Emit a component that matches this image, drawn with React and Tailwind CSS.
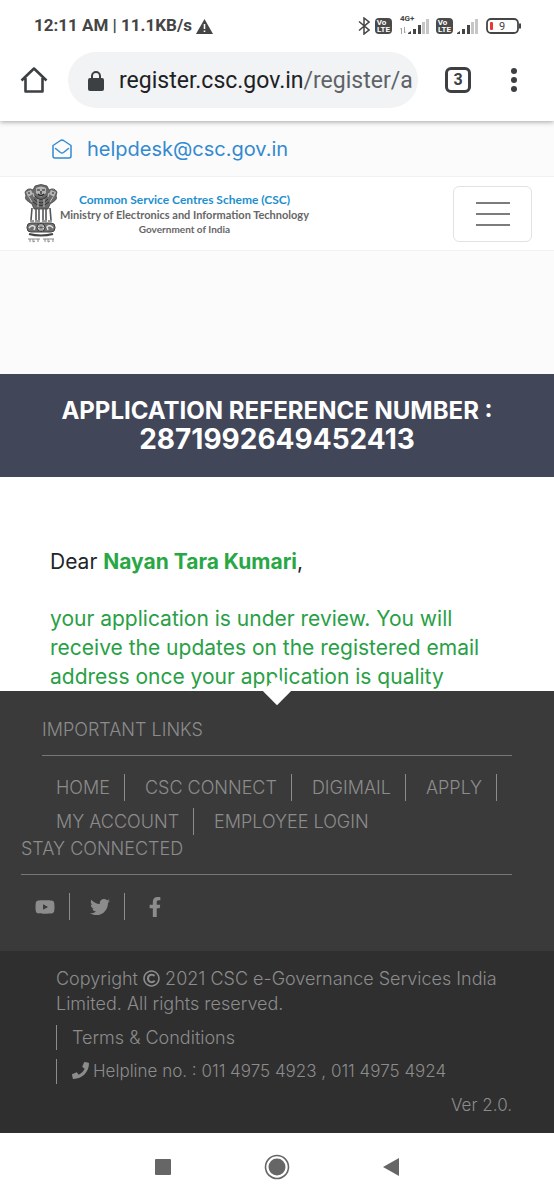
import React from 'react';
import { FaYoutube, FaTwitter, FaFacebookF, FaRegCopyright } from 'react-icons/fa';

const LINKS = ['HOME', 'CSC CONNECT', 'DIGIMAIL', 'APPLY', 'MY ACCOUNT', 'EMPLOYEE LOGIN'];

const SOCIAL = [
  { name: 'YouTube', Icon: FaYoutube },
  { name: 'Twitter', Icon: FaTwitter },
  { name: 'Facebook', Icon: FaFacebookF },
];

const Volte = () => (
  <span className="flex h-4 w-[17px] flex-col items-center justify-center rounded-sm bg-[#4a4a4a] text-[8px] leading-[7px] font-bold text-white">
    <span className="-ml-1">Vo</span>
    <span>LTE</span>
  </span>
);

const Signal = () => (
  <svg width="21" height="16" viewBox="0 0 21 16">
    <path d="M0 16v-1l3-2v3zM5 11h3v5H5zM10 7h3v9h-3z" fill="#454545" />
    <path d="M14 4h3v12h-3zM18 1h3v15h-3z" fill="#c6c6c6" />
  </svg>
);

const StatusBar = () => (
  <div className="flex h-[52px] items-center justify-between pr-8 pl-[34px] font-['Roboto',sans-serif] text-[#454545]">
    <div className="flex items-center gap-1 text-[17px] font-bold">
      <span>12:11 AM | 11.1KB/s</span>
      <svg width="17" height="15" viewBox="0 0 17 15">
        <path d="M8.500 0 17 15H0z" fill="#454545" />
        <path d="M7.700 5h1.600v5H7.700zM7.700 11.500h1.600V13H7.700z" fill="#fff" />
      </svg>
    </div>
    <div className="flex items-center gap-1">
      <svg className="mr-px" width="12" height="18" viewBox="0 0 12 18" fill="none" stroke="currentColor" strokeWidth="1.500">
        <path d="M1 4.500 11 13l-5 4V1l5 4L1 13.500" />
      </svg>
      <Volte />
      <div className="relative ml-3">
        <Signal />
        <span className="absolute -top-1 -left-2 text-[8px] leading-[10px] font-bold">4G+</span>
        <svg className="absolute bottom-0 -left-2" width="6" height="7" viewBox="0 0 6 7" fill="none" stroke="#a5a5a5">
          <path d="M1.500 7V1L0 2.500M4.500 0v6L6 4.500" />
        </svg>
      </div>
      <span className="ml-[3px]"><Volte /></span>
      <Signal />
      <svg className="ml-1" width="36" height="16" viewBox="0 0 36 16">
        <rect x="1" y="1" width="31" height="14" rx="4" fill="none" stroke="#454545" strokeWidth="1.800" />
        <path d="M34 5.500v5" stroke="#454545" strokeWidth="2" />
        <rect x="4" y="4" width="3" height="8" rx="1" fill="#e53935" />
        <text x="13" y="12" fontSize="11" fill="#454545">9</text>
      </svg>
    </div>
  </div>
);

const AddressBar = () => (
  <div className="flex items-center pr-[34px] pb-[13px] pl-5 font-['Roboto',sans-serif] text-[#3c4043]">
    <button aria-label="Home">
      <svg width="28" height="28" viewBox="0 0 28 28" fill="none" stroke="currentColor" strokeWidth="2.600">
        <path d="M1.500 14.500 14 2.500l12.500 12M5.500 12v13.500h17V12" strokeLinejoin="round" />
      </svg>
    </button>
    <button className="ml-5 flex h-14 min-w-0 flex-1 items-center rounded-full bg-[#f1f3f4] pt-[2px] pr-1 pl-5 text-left">
      <svg className="shrink-0" width="16" height="20" viewBox="0 0 16 20">
        <path d="M4 8V5a4 4 0 0 1 8 0v3" fill="none" stroke="currentColor" strokeWidth="2" />
        <rect y="7" width="16" height="13" rx="2" fill="currentColor" />
      </svg>
      <span className="ml-[15px] text-[23px] whitespace-nowrap text-[#202124]">
        register.csc.gov.in<span className="text-[#5f6368]">/register/a</span>
      </span>
    </button>
    <button className="ml-[27px] flex size-[26px] items-center justify-center rounded-md border-[3px] border-[#3c4043] text-base font-bold" aria-label="Tabs">3</button>
    <button className="ml-[37px] flex w-3 flex-col items-center gap-[3px]" aria-label="Menu">
      <span className="size-[6px] rounded-full bg-[#3c4043]" />
      <span className="size-[6px] rounded-full bg-[#3c4043]" />
      <span className="size-[6px] rounded-full bg-[#3c4043]" />
    </button>
  </div>
);

const Emblem = () => (
  <svg width="34" height="60" viewBox="0 0 34 60" fill="none">
    {/* lions */}
    <path d="M11 2q6-3 12 0l2 4q5-3 8 2l-1 4q2 3-3 6l-3 2-2 5H10l-2-5-3-2q-5-3-3-6L1 8q3-5 8-2z" fill="#6a6a6a" stroke="#444" strokeWidth=".8" />
    <path d="M12 4q5-3 10 0v5l-5 4-5-4zM2 8l5-2 2 4-5 3zM32 8l-5-2-2 4 5 3z" fill="#b5b5b5" />
    <path d="M13 6h3M18 6h3M14 10q3 3 6 0M17 7v3M4 9h2M28 9h2" stroke="#222" strokeWidth="1.200" />
    <path d="M11 12q6 7 12 0M10 15q7 8 14 0M9 18q8 7 16 0" stroke="#333" />
    <path d="M5 13l3 5M29 13l-3 5M9 9l1 4M25 9l-1 4M14 15v8M20 15v8" stroke="#c4c4c4" />
    {/* legs */}
    <path d="M8 24l-1 12M12 24v12M15 25v11M19 25v11M22 24v12M26 24l1 12" stroke="#555" strokeWidth="1.600" />
    <path d="M6 37h4M11 37h5M18 37h5M24 37h4" stroke="#333" />
    {/* abacus with the wheel */}
    <rect x="3" y="39" width="28" height="9" rx="4" fill="#707070" stroke="#444" />
    <circle cx="17" cy="43.500" r="4" fill="#d4d4d4" stroke="#333" />
    <path d="M17 40v7M13.500 43.500h7M14.500 41l5 5M19.500 41l-5 5" stroke="#555" strokeWidth=".7" />
    <path d="M5 44q3-4 6-1l-1 3M29 44q-3-4-6-1l1 3" stroke="#e2e2e2" strokeWidth="1.400" />
    <path d="M5 50q12 3 24 0" stroke="#444" strokeWidth="2" />
    <path d="M4 55h12M19 55h11M6 55v3M9 55v3l2-1M14 55v3M21 55v3M24 55v3l2-1M29 55v3" stroke="#888" />
  </svg>
);

const Header = () => (
  <header className="bg-[#fbfbfb]">
    <div className="flex h-[55px] items-center gap-[15px] pl-[52px] font-['Inter',sans-serif] text-xl text-[#338ad0]">
      <svg width="20" height="20" viewBox="0 0 20 20" fill="none" stroke="currentColor" strokeWidth="1.500" strokeLinejoin="round">
        <path d="M1 6.500 8.500 1.500q1.500-.8 3 0L19 6.500V17q0 2-2 2H3q-2 0-2-2z" />
        <path d="m3.500 9.500 5 4q1.500 1 3 0l5-4" strokeLinecap="round" />
      </svg>
      <a href="#helpdesk">helpdesk@csc.gov.in</a>
    </div>
    <div className="flex h-[75px] items-center justify-between border-y border-[#f1f1f1] bg-white pr-[22px] pl-6">
      <a href="#top" className="flex items-center gap-[2px]">
        <Emblem />
        <span className="flex flex-col items-center font-['Lato',sans-serif] font-bold text-[#666]">
          <span className="text-[12px] leading-[16px] text-[#1c8fd0]">Common Service Centres Scheme (CSC)</span>
          <span className="text-[11px] leading-[14px]">Ministry of Electronics and Information Technology</span>
          <span className="text-[10px] leading-[14px]">Government of India</span>
        </span>
      </a>
      <button className="flex h-14 w-[79px] flex-col items-center justify-center gap-[9px] rounded-md border border-[#e2e2e2]" aria-label="Toggle navigation">
        <span className="h-[2px] w-[34px] bg-[#7c7c7c]" />
        <span className="h-[2px] w-[34px] bg-[#7c7c7c]" />
        <span className="h-[2px] w-[34px] bg-[#7c7c7c]" />
      </button>
    </div>
  </header>
);

const Footer = () => (
  <footer className="relative bg-[#3a3a3a] font-['Inter',sans-serif] font-light text-[#8c8c8c]">
    <div className="absolute -top-[10px] left-1/2 size-5 -translate-x-1/2 rotate-45 bg-white" />
    <div className="pt-[25px] pr-[42px] pb-[31px] pl-[21px] text-lg leading-[27px]">
      <div className="pl-[21px]">
        <h2 className="mb-3 border-b border-[#777] pb-3">IMPORTANT LINKS</h2>
        <ul className="-mr-5 flex flex-wrap gap-y-[7px] pt-[6px] pl-[14px]">
          {LINKS.map((name, i) => (
            <li key={name} className={i === LINKS.length - 1 ? '' : 'mr-5 border-r border-[#8c8c8c] pr-[14px]'}>
              <a href="#link">{name}</a>
            </li>
          ))}
        </ul>
      </div>
      <h2 className="border-b border-[#777] pb-3">STAY CONNECTED</h2>
      <ul className="flex pt-[18px] pl-[14px]">
        {SOCIAL.map(({ name, Icon }, i) => (
          <li key={name} className={i === SOCIAL.length - 1 ? '' : 'mr-5 border-r border-[#8c8c8c] pr-[14px]'}>
            <a href="#social" aria-label={name} className="flex h-[27px] items-center"><Icon size={20} /></a>
          </li>
        ))}
      </ul>
    </div>
    <div className="bg-[#2f2f2f] pt-[15px] pr-[42px] pb-[15px] pl-14 text-[17px] leading-[25px]">
      <p className="text-lg leading-[25px]">
        Copyright <FaRegCopyright size={17} className="mb-1 inline" /> 2021 CSC e-Governance Services India Limited. All rights reserved.
      </p>
      <div className="mt-[9px] border-l border-[#8c8c8c] pl-[15px] text-lg leading-[25px]">
        <a href="#terms">Terms &amp; Conditions</a>
      </div>
      <div className="mt-[9px] border-l border-[#8c8c8c] pl-[15px]">
        <svg className="mr-1 mb-1 inline" width="17" height="17" viewBox="0 0 512 512" fill="currentColor">
          <path d="M493.400 24.600l-104-24c-11.300-2.600-22.900 3.300-27.500 13.900l-48 112c-4.200 9.800-1.400 21.300 6.900 28l60.600 49.600c-36 76.700-98.900 140.500-177.200 177.200l-49.600-60.600c-6.800-8.300-18.200-11.100-28-6.900l-112 48C3.900 366.500-2 378.100.6 389.400l24 104C27.100 504.200 36.700 512 48 512c256.100 0 464-207.500 464-464 0-11.200-7.700-20.900-18.600-23.400z" />
        </svg>
        Helpline no. : 011 4975 4923 , 011 4975 4924
      </div>
      <p className="mt-[9px] text-right">Ver 2.0.</p>
    </div>
  </footer>
);

export default function App() {
  return (
    <div className="min-h-screen bg-white">
      <div className="relative bg-white shadow-[0_1px_5px_rgba(0,0,0,0.35)]">
        <StatusBar />
        <AddressBar />
      </div>
      <Header />
      <main className="font-['Inter',sans-serif]">
        <div className="h-[123px] bg-[#fbfbfb]" />
        <h1 className="bg-[#424659] px-10 pt-[22px] pb-[22px] text-center text-2xl leading-[29px] font-bold text-white">
          APPLICATION REFERENCE NUMBER : <span className="text-[28px] leading-[29px]">2871992649452413</span>
        </h1>
        <div className="px-[50px] pt-[70px] text-[21px] leading-[29px] text-[#212529]">
          <p>Dear <strong className="text-[#28a745]">Nayan Tara Kumari</strong>,</p>
          <p className="mt-7 text-[#28a045]">
            your application is under review. You will receive the updates on the registered email address once your application is quality
          </p>
        </div>
      </main>
      <Footer />
      <nav className="flex h-[67px] items-center justify-center gap-[93px] bg-white text-[#666]">
        <button aria-label="Recents" className="size-4 rounded-[1px] bg-[#666]" />
        <button aria-label="Home">
          <svg width="26" height="26" viewBox="0 0 26 26">
            <circle cx="13" cy="13" r="11.500" fill="none" stroke="currentColor" strokeWidth="1.600" />
            <circle cx="13" cy="13" r="8.500" fill="currentColor" />
          </svg>
        </button>
        <button aria-label="Back">
          <svg width="16" height="18" viewBox="0 0 16 18">
            <path d="M0 9 16 0v18z" fill="currentColor" />
          </svg>
        </button>
      </nav>
    </div>
  );
}
